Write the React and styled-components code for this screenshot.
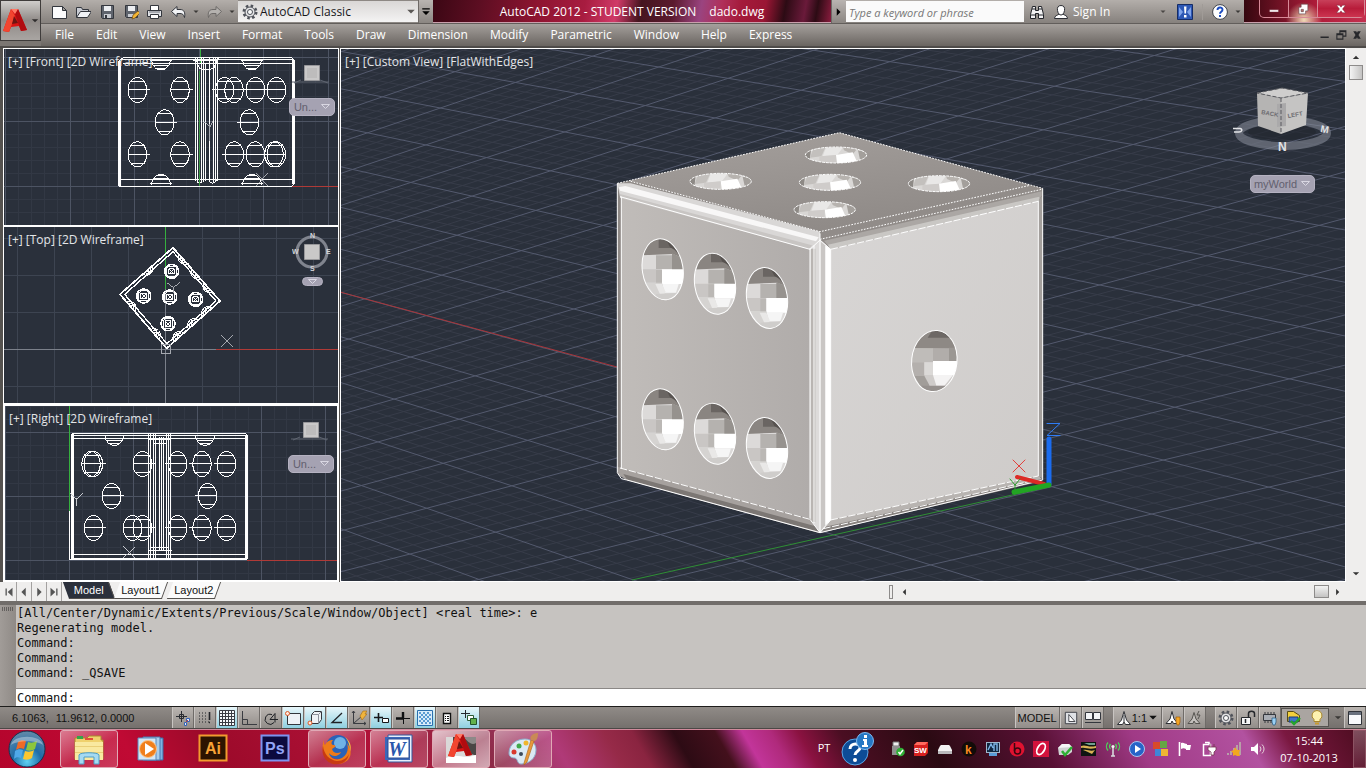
import styled, { createGlobalStyle, css } from "styled-components";

const menuItems = [
  "File",
  "Edit",
  "View",
  "Insert",
  "Format",
  "Tools",
  "Draw",
  "Dimension",
  "Modify",
  "Parametric",
  "Window",
  "Help",
  "Express",
];

const commandHistory = [
  "[All/Center/Dynamic/Extents/Previous/Scale/Window/Object] <real time>: e",
  "Regenerating model.",
  "Command:",
  "Command:",
  "Command: _QSAVE",
];

const quickActions = [
  { name: "New", icon: "newFile" },
  { name: "Open", icon: "open" },
  { name: "Save", icon: "save" },
  { name: "Save As", icon: "saveAs" },
  { name: "Plot", icon: "print" },
];

const draftToggles = [
  { name: "Infer Constraints", icon: "infer" },
  { name: "Snap Mode", icon: "snap" },
  { name: "Grid Display", icon: "grid", on: true },
  { name: "Ortho Mode", icon: "ortho" },
  { name: "Polar Tracking", icon: "polar" },
  { name: "Object Snap", icon: "osnap", on: true },
  { name: "3D Object Snap", icon: "osnap3d", on: true },
  { name: "Object Snap Tracking", icon: "otrack", on: true },
  { name: "Dynamic UCS", icon: "ducs" },
  { name: "Dynamic Input", icon: "dyn", on: true },
  { name: "Lineweight", icon: "lineweight" },
  { name: "Transparency", icon: "transparency", on: true },
  { name: "Quick Properties", icon: "quickProps" },
  { name: "Selection Cycling", icon: "cycling", on: true },
];

const taskbarApps = [
  { name: "Explorer", icon: "explorer", open: true },
  { name: "Media Player", icon: "mediaPlayer" },
  { name: "Illustrator", icon: "illustrator" },
  { name: "Photoshop", icon: "photoshop" },
  { name: "Firefox", icon: "firefox", open: true },
  { name: "Word", icon: "word", open: true },
  { name: "AutoCAD", icon: "autocad", open: true, active: true },
  { name: "Paint", icon: "paint", open: true },
];

const trayIcons = [
  "usb",
  "solidworks",
  "drive",
  "hamachi",
  "monitor",
  "beats",
  "opera",
  "printer",
  "winamp",
  "antenna",
  "play",
  "blocks",
  "flag",
  "power",
  "signal",
  "volume",
];

const outline = { stroke: "#33363d", strokeWidth: 1 };

const autocadMark = (
  <>
    <path d="M1 25 9 3l7 0 9 21-6 1-2-5-8 1-2 5z" fill="#d81414" />
    <path d="M9 3 1 25l6 1 6-16z" fill="#f2452f" />
    <path d="m16 3 9 21-6 1-6-17z" fill="#b00c10" />
    <path d="m12 10 4 7-6 1z" fill="#6d1512" />
    <path d="M9 3h7l-3 5z" fill="#ff7a66" />
  </>
);

const icons = {
  newFile: (
    <path d="M1.500 2.500h10l4 4v8h-14zM11.500 2.500v4h4" fill="#fbfbfc" {...outline} />
  ),
  open: (
    <>
      <path d="M1.500 13.500v-10h5l1 2h6v2" fill="#c9ccd4" {...outline} />
      <path d="m1.500 13.500 4-6h11l-4 6z" fill="#f1f3f7" {...outline} />
    </>
  ),
  save: (
    <>
      <path d="M2.500 1.500h12v13h-11l-1-1z" fill="#5f646d" {...outline} />
      <path d="M5 2h7v5H5z" fill="#eceef1" />
      <path d="M5 10h7v4H5z" fill="#c9ccd2" />
      <path d="M6 11h2v3H6z" fill="#33363d" />
    </>
  ),
  saveAs: (
    <>
      <path d="M2.500 1.500h12v12h-11l-1-1z" fill="#5f646d" {...outline} />
      <path d="M5 2h7v5H5z" fill="#eceef1" />
      <path d="M5 10h6v3H5z" fill="#c9ccd2" />
      <path d="m9 15 1-4 5-4 2 2-5 5z" fill="#f4b532" stroke="#704c14" strokeWidth=".7" />
    </>
  ),
  print: (
    <>
      <path d="M4.500 1.500h8v5h-8z" fill="#fff" {...outline} />
      <path d="M1.500 6.500h14v6h-14z" fill="#e0e2e6" {...outline} />
      <path d="M4.500 10.500h8v4h-8z" fill="#fff" {...outline} />
      <path d="M3 8h11" stroke="#6e737d" />
    </>
  ),
  undo: (
    <path
      d="M1.500 7.500 7 2.500v3h3c4 0 5.500 3 4.500 8-.8-3-2-4-4.500-4H7v3z"
      fill="#f3f4f6"
      {...outline}
    />
  ),
  redo: (
    <path
      d="M15.500 7.500 10 2.500v3H7c-4 0-5.500 3-4.500 8 .8-3 2-4 4.500-4h3v3z"
      fill="#b5b2af"
      stroke="#6d6a68"
    />
  ),
  gear: (
    <>
      <circle cx="8" cy="8" r="6" fill="none" stroke="#4f525a" strokeWidth="3" strokeDasharray="2.400 2.300" />
      <circle cx="8" cy="8" r="5" fill="#e4e4e6" stroke="#4f525a" />
      <circle cx="8" cy="8" r="2.500" fill="#fbfbfb" stroke="#4f525a" />
    </>
  ),
  caret: <path d="M3 5h10l-5 5z" fill="currentColor" />,
  caretBar: <path d="M3 3h10v1.500H3zM3 7h10l-5 5z" fill="currentColor" />,
  caretRight: <path d="M5 3v10l5-5z" fill="currentColor" />,
  caretLeft: <path d="M11 3v10L6 8z" fill="currentColor" />,
  caretUp: <path d="m3 11 5-5 5 5z" fill="currentColor" />,
  first: <path d="M4 4h1.500v8H4zM12 3v10L6.500 8z" fill="currentColor" />,
  last: <path d="M10.500 4H12v8h-1.500zM4 3v10l5.500-5z" fill="currentColor" />,
  prev: <path d="M10 3v10L5 8z" fill="currentColor" />,
  next: <path d="M6 3v10l5-5z" fill="currentColor" />,
  binoculars: (
    <>
      <path d="M3.500 2.500h3v4h3v-4h3l2 8v4h-5v-5h-3v5h-5v-4z" fill="#f2f2f3" stroke="#22242a" />
      <path d="M1.500 11h5M9.500 11h5M3 5h3.500M9.500 5H13" stroke="#22242a" />
    </>
  ),
  person: (
    <>
      <path d="M1.500 14.500c0-3 3-3 4.500-4.500h4c1.500 1.500 4.500 1.500 4.500 4.500z" fill="#fff" stroke="#2b2d33" />
      <path d="M8 1.500c3 0 4 2 3.500 5S9.500 11 8 11s-3-1.500-3.500-4.500S5 1.500 8 1.500z" fill="#fff" stroke="#2b2d33" />
    </>
  ),
  exchange: (
    <>
      <path d="M.500.500h15v15H.500z" fill="#2d57b4" stroke="#152c66" />
      <path d="m2 3 4 5-4 5zM14 3l-4 5 4 5z" fill="#7fa3ea" />
      <path d="M7 2.500h2.500l-.5 7H7.500zM7 11h2.500v2.500H7z" fill="#fff" />
    </>
  ),
  help: (
    <>
      <circle cx="8" cy="8" r="7.400" fill="#fff" stroke="#3f4248" />
      <path
        d="M5.500 6c0-3.300 5-3.200 5-.3 0 2-2.500 2-2.500 4"
        fill="none"
        stroke="#1c4cc0"
        strokeWidth="1.900"
      />
      <path d="M7 11h2v2H7z" fill="#1c4cc0" />
    </>
  ),
  minimize: <path d="M2 9h12v3H2z" fill="#fff" stroke="#6f2233" strokeWidth=".6" />,
  restore: (
    <path
      d="M5.500 1.500h9v9h-3v4h-9v-9h3zM5.500 8.500h3v3h-3z"
      fill="#fff"
      fillRule="evenodd"
      stroke="#5a3a40"
      strokeWidth=".8"
    />
  ),
  close: (
    <path
      d="M2 3h4l2 2.500L10 3h4l-4 5 4 5h-4l-2-2.500L6 13H2l4-5z"
      fill="#fff"
      stroke="#6f2233"
      strokeWidth=".6"
    />
  ),
  docMin: <path d="M2 10h11v2H2z" fill="#26272b" />,
  docRestore: (
    <path d="M6.500 6V2.500h8v7H11M6.500 3.500h8M2.500 6.500h8v7h-8zM3 7.500h7" fill="none" stroke="#26272b" strokeWidth="1.400" />
  ),
  docClose: (
    <path d="M3 3h4l1 2 1-2h4l-3 5 3 5H9l-1-2-1 2H3l3-5z" fill="#26272b" />
  ),
  infer: (
    <>
      <path d="M6.500 1v11M1 6.500h11M4.500 4.500h4v4h-4z" fill="none" stroke="#2a2c31" />
      <path d="M11.500 8.500h3v3h-3zM9.500 12.500h2v3h-2z" fill="#e9eefb" stroke="#3462b8" />
      <path d="m11 12 2-2" stroke="#d03a2c" />
    </>
  ),
  snap: (
    <>
      <path
        d="M2 3h1M5 3h1M8 3h1M2 6h1M5 6h1M8 6h1M2 9h1M5 9h1M8 9h1M2 12h1M5 12h1M8 12h1M11 12h1"
        stroke="#222428"
      />
      <path d="M12.500 2v8M12 12.500h1" stroke="#222428" strokeWidth="1.600" />
    </>
  ),
  grid: (
    <>
      <path d="M.500.500h15v15H.500z" fill="#f6fafc" />
      <path
        d="M.500.500h15v15H.500zM3.500 0v16M6.500 0v16M9.500 0v16M12.500 0v16M0 3.500h16M0 6.500h16M0 9.500h16M0 12.500h16"
        fill="none"
        stroke="#3a3d44"
      />
    </>
  ),
  ortho: <path d="M1.500 1v13.500H16M1.500 9.500h5v5" fill="none" stroke="#3a3c41" />,
  polar: (
    <path d="M7 9.500h8M7 9.500l5-6v9M9 4.700A5 5 0 1 0 11 12.500" fill="none" stroke="#1f2125" />
  ),
  osnap: (
    <>
      <path d="M2.500 3.500h13v11h-13z" fill="#eef2f6" stroke="#33363c" />
      <circle cx="2.500" cy="3.500" r="2" fill="#ffe9dd" stroke="#dc5a28" />
    </>
  ),
  osnap3d: (
    <>
      <path d="m4.500 4.500 3-3h7v8l-3 4h-7z" fill="#eef2f6" stroke="#33363c" />
      <path d="M4.500 4.500h7v9M11.500 4.500l3-3" fill="none" stroke="#8d929c" />
      <circle cx="3" cy="13" r="2" fill="#ffe9dd" stroke="#dc5a28" />
    </>
  ),
  otrack: <path d="M13 3 3 12.500h10" fill="none" stroke="#1f2125" strokeWidth="1.300" />,
  ducs: (
    <>
      <path d="M2.500 1v12.500H15M2.500 13.500 11 6M1 3l1.500-2L4 3M13 12l2 1.500-2 1.500" fill="none" stroke="#3a3c41" />
      <path d="m9 6 3-5h4l-2 3h2l-5 6z" fill="#f0b43c" stroke="#a36a12" strokeWidth=".6" />
    </>
  ),
  dyn: (
    <>
      <path d="M5.500 3v9M1 7.500h9" stroke="#16171a" strokeWidth="1.600" />
      <path d="M9.500 8.500h6v4h-6z" fill="#fff" stroke="#16171a" />
    </>
  ),
  lineweight: (
    <>
      <path d="M8 2v6M1 8.500h7" stroke="#0e0f11" strokeWidth="2.400" />
      <path d="M8.500 8v6M8 8.500h7" stroke="#0e0f11" />
    </>
  ),
  transparency: (
    <>
      <path d="M.500.500h15v15H.500z" fill="#d9ecfa" stroke="#2a6fae" />
      <path
        d="M2 2h2v2H2zM6 2h2v2H6zM10 2h2v2h-2zM4 4h2v2H4zM8 4h2v2H8zM12 4h2v2h-2zM2 6h2v2H2zM6 6h2v2H6zM10 6h2v2h-2zM4 8h2v2H4zM8 8h2v2H8zM12 8h2v2h-2zM2 10h2v2H2zM6 10h2v2H6zM10 10h2v2h-2zM4 12h2v2H4zM8 12h2v2H8zM12 12h2v2h-2z"
        fill="#5b9bd2"
      />
    </>
  ),
  quickProps: (
    <>
      <path d="M4.500 3.500h7v10h-7z" fill="#fff" stroke="#111" strokeWidth="1.400" />
      <path d="M6 6.500h1M8 6.500h2M6 8.500h1M8 8.500h2M6 10.500h1M8 10.500h2" stroke="#111" />
    </>
  ),
  cycling: (
    <>
      <path d="M4.500 0v8M0 3.500h9" stroke="#26282d" />
      <path d="M6.500 5.500h6v5h-6z" fill="#fff" stroke="#2c5b32" />
      <path d="M9.500 8.500h6v6h-6z" fill="#62b14b" stroke="#22542a" />
    </>
  ),
  modelSpace: (
    <>
      <path d="M1.500 1.500h13v13h-13z" fill="#dfe1e5" {...outline} />
      <path d="M5.500 4v8h7z" fill="#fff" {...outline} />
    </>
  ),
  quickLayouts: (
    <>
      <path d="M.500 2.500h7v7h-7zM8.500 2.500h7v7h-7z" fill="#f3f4f6" {...outline} />
      <path d="M0 12.500h16" stroke="#33363d" />
    </>
  ),
  annoScale: (
    <path
      d="M8 1.500 5.500 10l-4 4.500h5L8 12l1.500 2.500h5l-4-4.500zM8 5v7"
      fill="#fff"
      stroke="#2f3136"
    />
  ),
  annoVisible: (
    <>
      <path d="M7 1.500 5 9l-4 4.500h5L7 11l1.500 2.500H13L9 9z" fill="#fff" stroke="#2f3136" />
      <path d="M11 7h4v5l-1 3h-2l-1-3z" fill="#f5a623" stroke="#9d5c10" strokeWidth=".7" />
    </>
  ),
  annoAuto: (
    <>
      <path d="M7 2.500 5 9l-4 4.500h5L7 11l1.500 2.500H13L9 9z" fill="#c4c0bd" stroke="#55534f" />
      <path d="m12 1-2 4h3l-2 4" fill="none" stroke="#55534f" />
    </>
  ),
  lock: (
    <>
      <path d="M1.500 7.500h9v7h-9z" fill="#f6f6f7" stroke="#25272b" />
      <path d="M8.500 7V3.500c0-3 6-3 6 0V7" fill="none" stroke="#25272b" strokeWidth="1.500" />
      <path d="M5.500 9v4" stroke="#25272b" strokeWidth="1.500" />
    </>
  ),
  chip: (
    <>
      <path d="M1.500 4.500h12v6h-12z" fill="#a9adb4" stroke="#34373d" />
      <path d="M3 2v2M6 2v2M9 2v2M12 2v2M3 11v2M6 11v2M9 11v2" stroke="#34373d" />
      <path d="M10 8h4v4l-1 3h-2l-1-3z" fill="#9ad0f4" stroke="#27567d" strokeWidth=".7" />
    </>
  ),
  layers: (
    <>
      <path d="M1.500 1.500h6l6 4v6h-12z" fill="#f2cf3c" stroke="#594c12" />
      <path d="M3 7h9v5H3z" fill="#3f74c9" stroke="#1c3d78" />
      <path d="m5 11 3 3 6-6" fill="none" stroke="#25a52c" strokeWidth="2.400" />
    </>
  ),
  bulb: (
    <>
      <path d="M8 .500a5 5 0 0 1 3 9v2H5v-2A5 5 0 0 1 8 .500z" fill="#fdf2b0" stroke="#a8862c" />
      <path d="M6 12.500h4v2H6z" fill="#c99a2e" />
    </>
  ),
  cleanScreen: (
    <>
      <path d="M1.500 1.500h13v13h-13z" fill="#f8f9fb" stroke="#2f3238" />
      <path d="M2 2h12v3H2z" fill="#69707d" />
    </>
  ),

  usb: (
    <>
      <path d="M4 1h6v4H4z" fill="#eee" stroke="#777" />
      <path d="M3 5h8v9H3z" fill="#8f8f8f" />
      <circle cx="11.500" cy="11" r="4.300" fill="#2eaf33" />
      <path d="m9.500 11 1.500 2 3-4" fill="none" stroke="#fff" strokeWidth="1.500" />
    </>
  ),
  solidworks: (
    <>
      <path d="M1 4 4 1h11v11l-3 3H1z" fill="#d8201f" />
      <path d="M1 4 4 1h11l-3 3z" fill="#ff6a5f" />
      <text x="1" y="12" fontSize="8" fontWeight="700" fill="#fff">SW</text>
    </>
  ),
  drive: (
    <>
      <path d="m3 5 1-1h8l1 1 2 4v4H1V9z" fill="#f3f3f3" />
      <path d="M1 10h14v3H1z" fill="#b9b9bb" />
    </>
  ),
  hamachi: (
    <>
      <circle cx="8" cy="8" r="7.500" fill="#120c08" />
      <text x="4" y="13" fontSize="12" fontWeight="700" fill="#f6871f">k</text>
    </>
  ),
  monitor: (
    <>
      <path d="M1 1h14v11H1z" fill="#9fb6cc" />
      <path d="M2 2h12v9H2z" fill="#0f2740" />
      <path d="M3 9l3-6 2 4M9 10V3h3v7" fill="none" stroke="#7fb6e8" strokeWidth="1.400" />
      <path d="M4 12h8v3H4z" fill="#5b9cd8" />
    </>
  ),
  beats: (
    <>
      <circle cx="8" cy="8" r="7.500" fill="#e01230" />
      <circle cx="8.500" cy="10" r="3" fill="none" stroke="#3a0610" strokeWidth="1.500" />
      <path d="M5.500 2v8" stroke="#3a0610" strokeWidth="1.500" />
    </>
  ),
  opera: (
    <>
      <path d="M0 0h16v16H0z" fill="#d3123c" />
      <ellipse cx="8" cy="8" rx="3.500" ry="6" transform="rotate(30 8 8)" fill="none" stroke="#fff" strokeWidth="1.800" />
    </>
  ),
  printer: (
    <>
      <path d="m1 7 4-4h7l3 3v5l-4 3H2z" fill="#cfd3d3" />
      <path d="m1 7 4-4h7l3 3z" fill="#f4f6f6" />
      <path d="m5 10 3 4 7-8" fill="none" stroke="#2fb034" strokeWidth="2.500" />
    </>
  ),
  winamp: (
    <>
      <path d="M0 1h15v14H0z" fill="#0f1512" />
      <path d="M0 5c5-2 7 2 15 0v2c-8 2-10-1-15 0zM2 9c5-1 7 2 12 0l-3 4c-3-1-5-3-9-4z" fill="#d9b254" />
      <path d="M3 2h11v2H8z" fill="#6fa08e" />
    </>
  ),
  antenna: (
    <>
      <path d="M8 6v9M6 15h4" stroke="#d8dadd" strokeWidth="1.600" />
      <path d="M5.500 3a4 4 0 0 0 0 5M10.500 3a4 4 0 0 1 0 5M3 1.500a6 6 0 0 0 0 8M13 1.500a6 6 0 0 1 0 8" fill="none" stroke="#4ed05a" strokeWidth="1.300" />
      <circle cx="8" cy="5.500" r="1.600" fill="#eef4ee" />
    </>
  ),
  play: (
    <>
      <circle cx="8" cy="8" r="7.500" fill="#2764c8" stroke="#a8c7f0" />
      <path d="M6 4v8l6-4z" fill="#fff" />
    </>
  ),
  blocks: (
    <>
      <path d="M0 1h7v7H0z" fill="#d84a2b" />
      <path d="M7 0h7v7H7z" fill="#65a543" />
      <path d="M2 8h6v7H2z" fill="#3f86d8" />
      <path d="M8 8h7v7H8z" fill="#efb532" />
    </>
  ),
  flag: (
    <>
      <path d="M2.500 1v14" stroke="#fff" strokeWidth="1.600" />
      <path d="M4 2c3-1 4 1 6 1v1h4l-1 5H9V8C7 7 6 7 4 8z" fill="#fff" />
    </>
  ),
  power: (
    <>
      <path d="M2.500 3.500h7v11h-7zM4 1.500h4v2" fill="none" stroke="#fff" strokeWidth="1.500" />
      <path d="M7 6h8v3l-2 2v3h-3v-3L7 9zM9 3v3M13 3v3" fill="#fff" stroke="#74324f" strokeWidth=".8" />
    </>
  ),
  signal: (
    <>
      <path d="M2 12h2v2H2zM5 10h2v4H5zM8 7h2v7H8zM11 4h2v10h-2zM14 1h2v13h-2z" fill="#b7a0a8" />
      <path d="m10 6 2 3h3l-1 3 1 3h-3l-2-1-2 1v-3l-2-2 3-1z" fill="#f2a81e" />
    </>
  ),
  volume: (
    <>
      <path d="M2 6h3l4-4v12l-4-4H2z" fill="#fff" />
      <path d="M11 5.500a4 4 0 0 1 0 5M13 3.500a6 6 0 0 1 0 9" fill="none" stroke="#e6d2da" />
    </>
  ),
};

// 32px artwork for the taskbar
const appArt = {
  explorer: (
    <>
      <path d="M2 5h12l2-2h12v4h2v19H2z" fill="#efd16d" stroke="#a98a2e" />
      <path d="M4 3h6v3H4z" fill="#35a34a" />
      <path d="M12 5h8v2h-8z" fill="#e24e3b" />
      <path d="M2 9h28v18H2z" fill="#f9e9a0" />
      <path d="M2 13h28v1H2zM2 19h28v1H2z" fill="#e9cf78" />
      <path d="M6 31v-9c0-3 20-3 20 0v9h-5v-7H11v7z" fill="#a5daf2" stroke="#4c9fc9" />
    </>
  ),
  mediaPlayer: (
    <>
      <path d="M12 5h16v22H12z" fill="#7fb2e2" stroke="#3b6aa3" />
      <path d="M8 4h17v23H8z" fill="#a8cdec" stroke="#4879b0" />
      <path d="M3 5h18v22H3z" fill="#d3e6f6" stroke="#5b88b8" />
      <circle cx="13" cy="16" r="8.500" fill="#f07f1c" stroke="#fbc48a" />
      <path d="M10 10v12l9-6z" fill="#fff" />
    </>
  ),
  illustrator: (
    <>
      <path d="M2.500 2.500h27v25h-27z" fill="#2d1400" stroke="#f29a2e" strokeWidth="2" />
      <text x="8" y="21" fontSize="16" fontWeight="700" fill="#f7a336">Ai</text>
    </>
  ),
  photoshop: (
    <>
      <path d="M2.500 2.500h27v25h-27z" fill="#0c0a3e" stroke="#7d93f0" strokeWidth="2" />
      <text x="6" y="21" fontSize="16" fontWeight="700" fill="#93a6f8">Ps</text>
    </>
  ),
  firefox: (
    <>
      <circle cx="17" cy="14" r="12" fill="#2a62b8" />
      <circle cx="19" cy="10" r="6" fill="#6fb3e6" />
      <path
        d="M3 7c0 3 0 4 1 5 2-4 5-5 8-5-2 2-2 4 0 5 2 0 3 1 2 2l-3 2c1 4 5 5 9 3-1 4-9 6-12 1 1 6 8 8 13 5 5-3 7-8 5-15 6 8 4 16-2 19-7 4-16 2-20-5-3-6-3-12-1-17z"
        fill="#ee7a1a"
      />
      <path d="M2 13c1 8 6 14 14 15 6 0 10-3 12-7-2 9-9 11-16 10C4 29 0 21 2 13z" fill="#c83a12" />
      <path d="M24 4c5 4 7 9 5 15 0-6-1-10-5-15z" fill="#fbc23a" />
    </>
  ),
  word: (
    <>
      <path d="M5 2h24v27H5z" fill="#e6eefb" stroke="#35599c" />
      <path d="M2 4h25v23H2z" fill="#3a67b8" />
      <path d="M5 6h21v19H5z" fill="#fff" stroke="#2b4f94" />
      <text x="5" y="23" fontFamily="Liberation Serif, serif" fontSize="20" fontWeight="700" fontStyle="italic" fill="#2b57ac">
        W
      </text>
    </>
  ),
  autocad: (
    <>
      <path d="M1 4h30v26H1z" fill="#dad9d8" />
      <path d="M8 4h23v18c-9 0-9-8-23-7z" fill="#4a4645" />
      <path d="M18 4h13v6c-5 3-8-2-13-6z" fill="#8d8988" />
      <path d="M1 25c10-6 18 2 30-3v8H1z" fill="#fff" />
      <g transform="translate(2 -2)">{autocadMark}</g>
    </>
  ),
  paint: (
    <>
      <path
        d="M2 20C2 11 10 6 18 6c7 0 11 5 11 11 0 9-8 14-15 14-4 0-3-5-6-6-3 0-6-1-6-5z"
        fill="#dbe9f4"
        stroke="#8eb1cd"
      />
      <circle cx="7" cy="19" r="2.500" fill="#d9382c" />
      <circle cx="12" cy="13" r="2.500" fill="#3fa84a" />
      <circle cx="19" cy="10" r="2.500" fill="#f0b62c" />
      <circle cx="14" cy="21" r="2" fill="#3b4a5c" />
      <path d="m17 30 7-23 3 1-7 21-3 3z" fill="#e8983a" stroke="#a9641c" strokeWidth=".6" />
      <path d="M24 7c-2-3 1-7 7-7 0 4-1 8-4 8z" fill="#c98a56" />
    </>
  ),
};

function Icon({ name, size = 16 }) {
  return (
    <svg width={size} height={size} viewBox="0 0 16 16" aria-hidden="true">
      {icons[name]}
    </svg>
  );
}

function range(from, to, step) {
  const values = [];
  for (let value = from; value <= to; value += step) {
    values.push(value);
  }
  return values;
}

// Maps a point of the ground plane to the perspective view
function project(i, j) {
  const w = 1 - 0.03 * i - 0.019 * j;
  const x = (1051.7 + 65.4 * i + 89.5 * j) / w;
  const y = (486.7 + 11.9 * i - 35.4 * j) / w;
  return `${x.toFixed(1)} ${y.toFixed(1)}`;
}

function groundPath(major) {
  const parts = [];
  for (let n = -140; n <= 80; n++) {
    if ((n % 5 === 0) !== major) continue;
    const value = n / 5;
    if (value <= 5) {
      parts.push(`M${project(value, -14)}L${project(value, 20)}`);
    }
    if (value >= -14) {
      parts.push(`M${project(-26, value)}L${project(6, value)}`);
    }
  }
  return parts.join("");
}

const groundMajor = groundPath(true);
const groundMinor = groundPath(false);

function FlatGrid({ x, y, step, minor }) {
  const lines = (gap) =>
    range(x - Math.ceil(x / gap) * gap, 340, gap)
      .map((value) => `M${value.toFixed(1)} 0V600`)
      .concat(
        range(y - Math.ceil(y / gap) * gap, 600, gap).map(
          (value) => `M0 ${value.toFixed(1)}H340`
        )
      )
      .join("");
  return (
    <g fill="none">
      {minor && <path d={lines(step / 5)} stroke="#323844" />}
      <path d={lines(step)} stroke={minor ? "#4d5463" : "#3d4451"} />
    </g>
  );
}

function WirePip({ x, y, flip }) {
  const side = flip ? -1 : 1;
  return (
    <g transform={`translate(${x} ${y}) scale(${side} 1)`}>
      <ellipse rx="28" ry="38" />
      <path d="M-28 0H38M-20-26H22M-20 27H22M20-28C30-10 30 12 20 28" />
    </g>
  );
}

function HalfPip({ x, y, up }) {
  return (
    <path
      transform={`translate(${x} ${y}) scale(1 ${up ? -1 : 1})`}
      d="M-29 4C-26 26-14 36 0 36S26 26 29 4M-32 8H32M-24 22H24M-14 32H14"
    />
  );
}

function FrontDrawing() {
  return (
    <g transform="translate(-4 -49)" shapeRendering="crispEdges">
      <FlatGrid x={199.3} y={186.3} step={64.5} minor />
      <path d="M200 49V64" stroke="#35b03e" strokeWidth="1" />
      <path d="M290 186.500H340" stroke="#b03a37" />
      <g transform="translate(0 44) scale(.33333)" fill="none" stroke="#fff" strokeWidth="3">
        <path d="M368 42H875L885 50V415L875 427H357V50zM360 48H880M370 60H875M360 408H880" />
        <path d="M359 50V427M881 48V420" strokeWidth="8" />
        <path d="M587 42V410M592 42V410M604 42V418M612 42V415M618 60V410M628 42V415M640 42V415M646 42V415M653 42V410M590 410Q598 425 606 410M626 410Q638 425 650 410" />
        <path d="M580 50H655M584 60H650M596 70Q620 84 645 70M585 42L600 75M655 42L640 75" />
        <path d="M599 80V427" stroke="#3d9a45" />
        <path d="M608 236H618L630 248L640 230M628 240V292M770 388L802 425M802 388L770 425" stroke="#a6a9b0" />
        <HalfPip x={483} y={42} />
        <HalfPip x={756} y={42} />
        <HalfPip x={483} y={427} up />
        <HalfPip x={756} y={427} up />
        <WirePip x={412} y={138} />
        <WirePip x={540} y={138} />
        <WirePip x={494} y={235} />
        <WirePip x={412} y={331} />
        <WirePip x={540} y={331} />
        <WirePip x={674} y={138} flip />
        <WirePip x={702} y={138} flip />
        <WirePip x={766} y={138} flip />
        <WirePip x={829} y={138} flip />
        <WirePip x={748} y={235} flip />
        <WirePip x={703} y={331} flip />
        <WirePip x={766} y={331} flip />
        <WirePip x={822} y={331} flip />
        <WirePip x={829} y={331} flip />
      </g>
    </g>
  );
}

const topPips = [
  [515, 139],
  [431, 213],
  [509, 216],
  [587, 223],
  [504, 296],
];

const edgePips = [
  [445, 138, 140],
  [548, 105, 225],
  [586, 150, 225],
  [622, 190, 225],
  [395, 242, 45],
  [468, 324, 45],
  [532, 332, -42],
  [576, 294, -42],
  [618, 258, -42],
];

function TopDrawing() {
  return (
    <g transform="translate(-4 -228)" shapeRendering="crispEdges">
      <FlatGrid x={165.5} y={350.5} step={36.9} />
      <path d="M4 350.500H216M165.500 290V404" stroke="#7b808a" />
      <path d="M165.500 227V290" stroke="#35b03e" />
      <path d="M216 350.500H340" stroke="#b03a37" />
      <g transform="translate(0 226) scale(.33333)" fill="none" stroke="#fff" strokeWidth="3">
        <path d="M519 68L660 228L500 370L360 208z" strokeWidth="5" />
        <path d="M519 80L648 228L501 356L374 208z" strokeWidth="4" />
        {edgePips.map(([x, y, angle]) => (
          <path
            key={`${x}-${y}`}
            transform={`translate(${x} ${y}) rotate(${angle})`}
            d="M-20 6C-14-16 14-16 20 6M-12 4C-8-8 8-8 12 4M-5-10L5 6M5-10L-5 6"
          />
        ))}
        {topPips.map(([x, y]) => (
          <g key={`${x}-${y}`} transform={`translate(${x} ${y})`}>
            <circle r="21" strokeWidth="5" />
            <path d="M-14-10L-9-15H10L15-10V10L9 15H-10L-15 10zM-8-8H8V8H-8zM-8-8L8 8M8-8L-8 8" />
          </g>
        ))}
        <path d="M500 172L520 188L540 172M520 188V205M662 330L698 366M698 330L662 366M484 358H512V385H484z" stroke="#a6a9b0" />
      </g>
    </g>
  );
}

function RightDrawing() {
  return (
    <g transform="translate(-5 -406)" shapeRendering="crispEdges">
      <FlatGrid x={69.3} y={560.3} step={64} minor />
      <path d="M69.500 400V512" stroke="#35b03e" />
      <path d="M247 560.500H340" stroke="#b03a37" />
      <g transform="translate(0 404) scale(.33333)" fill="none" stroke="#fff" strokeWidth="3">
        <path d="M208 320V468H741M215 88H735L742 94V460L735 467M220 94H738M220 103H738M220 452H738M222 464H738" />
        <path d="M217 90V466M740 92V464" strokeWidth="8" />
        <path d="M446 88V466M453 88V466M460 88V466M468 88V466M478 100V440M486 100V440M492 100V440M499 88V466M506 88V466M512 88V466" />
        <path d="M440 95H520M446 108H514M460 118H500M445 440H515M440 452H520M452 432H508M440 464H520" />
        <path d="M210 268L230 285L248 268M230 285V305M370 428L406 462M406 428L370 462" stroke="#c8cad0" />
        <HalfPip x={343} y={88} />
        <HalfPip x={615} y={88} />
        <WirePip x={273} y={180} />
        <WirePip x={280} y={180} />
        <WirePip x={427} y={180} />
        <WirePip x={335} y={276} />
        <WirePip x={281} y={372} />
        <WirePip x={398} y={372} />
        <WirePip x={427} y={372} />
        <WirePip x={533} y={180} flip />
        <WirePip x={606} y={180} flip />
        <WirePip x={679} y={180} flip />
        <WirePip x={623} y={276} flip />
        <WirePip x={533} y={372} flip />
        <WirePip x={606} y={372} flip />
        <WirePip x={679} y={372} flip />
      </g>
    </g>
  );
}

function SidePip({ x, y }) {
  return (
    <g transform={`translate(${x} ${y})`}>
      <g clipPath="url(#sideClip)">
        <path d="M-70-95H70V95H-70z" fill="#dcdad9" />
        <path d="M-70-95H70V-30L30-46L-70-42z" fill="#8a8581" />
        <path d="M-12-95H70V-20L30-64L-12-64z" fill="#6a6562" />
        <path d="M8-95H70V-40L22-66z" fill="#57524f" />
        <path d="M-20-42H30V0H-20z" fill="#b5b2af" />
        <path d="M28-48L70-30V6H28z" fill="#96928e" />
        <path d="M-64 0H-4V40H-64z" fill="#c9c6c4" />
        <path d="M-20 2H-2V44H-20z" fill="#bbb8b5" />
        <path d="M-2 0H70V44H-2z" fill="#fff" />
        <path d="M-2 44H48L40 70H6z" fill="#f5f5f5" />
        <path d="M-50 40H-2L6 70L-20 84z" fill="#d5d3d1" />
        <path d="M-22 44L0 92L8 66L-2 44z" fill="#e9e8e7" />
        <path d="M-20 74L50 70V95H-20z" fill="#cfcdcb" />
      </g>
      <ellipse rx="61" ry="92" transform="rotate(-9)" fill="none" stroke="#fff" strokeWidth="3" />
    </g>
  );
}

function LidPip({ x, y }) {
  return (
    <g transform={`translate(${x} ${y})`}>
      <g clipPath="url(#lidClip)">
        <path d="M-95-26H95V26H-95z" fill="#d9d7d5" />
        <path d="M-95-26H-74L-80 26H-95z" fill="#8d8985" />
        <path d="M-66-26L-30-26L-44 4L-78 8z" fill="#c3c0bd" />
        <path d="M-30-22L20-22L4 0L-40 4z" fill="#e9e8e7" />
        <path d="M20-26H70L50-2L24-14z" fill="#b7b3af" />
        <path d="M0 0L50-8L62 18L4 26z" fill="#fff" />
        <path d="M-50 4L0 0V26H-50z" fill="#cfccca" />
        <path d="M66-14L95-8V20L72 14z" fill="#a39f9b" />
      </g>
      <ellipse rx="92" ry="24" fill="none" stroke="#fff" strokeWidth="3" strokeDasharray="8 3" />
    </g>
  );
}

function DiceModel() {
  return (
    <g transform="translate(600 120) scale(.33333)">
      <defs>
        <linearGradient id="lid" x1="0" y1="0" x2=".5" y2="1">
          <stop offset="0" stopColor="#a5a09d" />
          <stop offset="1" stopColor="#8f8a87" />
        </linearGradient>
        <linearGradient id="side" x1="0" y1="0" x2="1" y2="0">
          <stop offset="0" stopColor="#c0bcb9" />
          <stop offset="1" stopColor="#b0acaa" />
        </linearGradient>
        <linearGradient id="front" x1="0" y1="0" x2="1" y2="1">
          <stop offset="0" stopColor="#d8d6d5" />
          <stop offset="1" stopColor="#cecbc9" />
        </linearGradient>
        <clipPath id="sideClip">
          <ellipse rx="61" ry="92" transform="rotate(-9)" />
        </clipPath>
        <clipPath id="lidClip">
          <ellipse rx="92" ry="24" />
        </clipPath>
        <clipPath id="frontClip">
          <ellipse rx="68" ry="92" transform="rotate(6)" />
        </clipPath>
      </defs>
      <path d="M52 190L718 38L1328 205V1070L660 1240L80 1080L52 1060z" fill="#8e8986" />
      <path d="M90 182L718 38L1290 195L660 335z" fill="url(#lid)" />
      <path d="M64 230L630 385V1196L64 1046z" fill="url(#side)" />
      <path d="M52 190H92L660 335V362L630 388L60 230z" fill="#d9d7d6" />
      <path d="M56 202L76 198L656 352L648 364L60 212z" fill="#f8f7f7" />
      <path d="M60 222L636 376L628 388L60 234z" fill="#c8c5c3" />
      <path d="M660 335L1290 196L1328 205V226L692 386L660 358z" fill="#918c89" />
      <path d="M672 362L1325 214V226L1318 240L692 386z" fill="#aba7a4" />
      <path d="M684 374L1318 230V242L692 388z" fill="#c9c7c4" />
      <path d="M692 388L1315 242V1068L692 1200z" fill="url(#front)" />
      <path d="M1315 242L1328 226V1076L1315 1068z" fill="#a39f9c" />
      <path d="M52 1040L630 1198L660 1238L80 1080L56 1066z" fill="#a6a19e" />
      <path d="M70 1062L644 1218L660 1236L80 1078z" fill="#7c7774" />
      <path d="M692 1200L1315 1068L1328 1078L660 1238z" fill="#b8b4b1" />
      <path d="M676 1220L1322 1078L1326 1084L660 1238z" fill="#87827f" />
      <path d="M630 384L660 360L692 386V1200L660 1238L630 1196z" fill="#dddbda" />
      <path d="M632 386H646V1206H632z" fill="#b9b5b2" />
      <path d="M662 366L676 376V1216L662 1232z" fill="#c9c6c4" />
      <path d="M676 376L692 388V1200L676 1216z" fill="#fff" />
      <g fill="none" stroke="#fff" strokeWidth="3">
        <path d="M52 190V1058L64 1076L80 1080L660 1238L1328 1080V205" />
        <path d="M52 190L718 38L1328 205M92 184L660 335L1290 196M660 358L1325 208" strokeDasharray="5 4" />
        <path d="M64 230V1046M60 230L630 388M630 384V1196M642 376V1210M660 340V1238" />
        <path d="M692 388L1315 244M692 1200L1315 1068M60 1044L630 1198M670 1226L1290 1084" strokeDasharray="22 5" />
        <path d="M630 388L660 360L692 388V1200L660 1238L630 1198M1315 242V1068" />
      </g>
      {[448, 898].map((y) => (
        <g key={y}>
          <SidePip x={188} y={y} />
          <SidePip x={345} y={y + 43} />
          <SidePip x={501} y={y + 86} />
        </g>
      ))}
      <LidPip x={708} y={105} />
      <LidPip x={362} y={184} />
      <LidPip x={690} y={187} />
      <LidPip x={1017} y={191} />
      <LidPip x={674} y={269} />
      <g transform="translate(1003 723)">
        <g clipPath="url(#frontClip)">
          <path d="M-75-95H75V95H-75z" fill="#cfccca" />
          <path d="M-75-95H75V-36L-75-38z" fill="#8e8985" />
          <path d="M-4-95H75V-70H-20z" fill="#6d6865" />
          <path d="M10-95H75V-56L46-72z" fill="#45403e" />
          <path d="M-75-38H-4V4H-75z" fill="#bfbcb9" />
          <path d="M-4-38H44V0H-4z" fill="#b1adaa" />
          <path d="M44-40H75V0H44z" fill="#9b9793" />
          <path d="M-4 0H75V42H-4z" fill="#fff" />
          <path d="M-75 4H-30V44H-75z" fill="#b4b0ad" />
          <path d="M-30 4H-4V42H-30z" fill="#dbd9d7" />
          <path d="M-4 42H56L30 74H6z" fill="#f4f3f3" />
          <path d="M-60 44H-30L-14 74L-40 80z" fill="#a19d99" />
          <path d="M-40 74H40V95H-40z" fill="#96918e" />
        </g>
        <ellipse rx="68" ry="92" transform="rotate(6)" fill="none" stroke="#fff" strokeWidth="3" />
      </g>
    </g>
  );
}

function CustomViewDrawing() {
  return (
    <g transform="translate(-341 -49)">
      <g fill="none">
        <path d={groundMinor} stroke="#373c49" />
        <path d={groundMajor} stroke="#545a6e" />
        <path d="M340 292L617 367" stroke="#a8353a" />
        <path d="M632 580L1048 487" stroke="#2f8f35" />
      </g>
      <DiceModel />
      <g fill="none" strokeLinecap="round">
        <path d="M1049 439V484" stroke="#1a6cf0" strokeWidth="5" />
        <path d="M1017 477L1044 484" stroke="#dc2a25" strokeWidth="4" />
        <path d="M1014 492L1049 485" stroke="#22a523" strokeWidth="5" />
        <path d="M1047 423.500H1060L1047 435.500H1060" stroke="#2f7cf5" />
        <path d="M1013 460L1025 472M1025 460L1013 472" stroke="#e2413c" />
        <path d="M1010 479L1015 485L1020 479M1015 485V490" stroke="#2c9e2e" />
      </g>
    </g>
  );
}

function ViewCube() {
  return (
    <svg width="110" height="78" viewBox="1228 80 110 78" role="img" aria-label="View cube">
      <ellipse cx="1284" cy="133" rx="44" ry="13" fill="none" stroke="#8b8f9c" strokeOpacity=".55" strokeWidth="8" />
      <ellipse cx="1283" cy="132" rx="34" ry="8" fill="#20232c" fillOpacity=".5" />
      <path d="M1258 93L1283 88L1309 93L1282 98z" fill="#cfcecd" />
      <path d="M1258 93L1282 98V134L1259 126z" fill="#b5b4b3" />
      <path d="M1282 98L1309 93L1307 125L1282 134z" fill="#c5c4c3" />
      <path d="M1278 104L1287 103V126L1278 127z" fill="#aaa9aa" />
      <path d="M1258 93L1283 88L1309 93L1282 98zM1282 98V134" fill="none" stroke="#5a5b60" strokeDasharray="4 2" />
      <g fontFamily="Liberation Sans, sans-serif" fontSize="6" fontWeight="700" fill="#6e6e72">
        <text x="1262" y="114" transform="rotate(10 1262 114)">BACK</text>
        <text x="1289" y="118" transform="rotate(-10 1289 118)">LEFT</text>
      </g>
      <g fontFamily="Liberation Sans, sans-serif" fontWeight="700" fill="#e2e3e6">
        <text x="1279" y="151" fontSize="12">N</text>
        <text x="1321" y="132" fontSize="10" transform="rotate(10 1321 132)">M</text>
      </g>
      <path d="M1234 128.500H1241C1244 129 1243 132 1240 132H1235" fill="none" stroke="#e2e3e6" strokeWidth="1.500" />
    </svg>
  );
}

function FaceCube() {
  return (
    <svg width="40" height="20" viewBox="0 0 40 20" aria-hidden="true">
      <path d="M0 17H37M2 18L9 15M28 15L36 18" stroke="#5f6571" />
      <path d="M12.500.500h15v15h-15z" fill="#c9c8c8" stroke="#98989b" />
      <path d="M15 3h10v10H15z" fill="#bdbcbc" />
    </svg>
  );
}

function Compass() {
  return (
    <svg width="40" height="40" viewBox="0 0 40 40" role="img" aria-label="Compass">
      <circle cx="20" cy="20" r="15" fill="none" stroke="#80848e" strokeWidth="3" />
      <path d="M12.500 12.500h15v15h-15z" fill="#c9c8c8" stroke="#98989b" />
      <g fontFamily="Liberation Sans, sans-serif" fontSize="7" fontWeight="700" fill="#d5d6d9">
        <text x="18" y="6">N</text>
        <text x="18" y="39">S</text>
        <text x="0" y="22">W</text>
        <text x="34" y="22">E</text>
      </g>
    </svg>
  );
}

export default function App() {
  return (
    <>
      <GlobalStyle />
      <Screen>
        <Header>
          <AppButton aria-label="Application menu">
            <svg width="28" height="30" viewBox="0 0 28 30" aria-hidden="true">
              {autocadMark}
            </svg>
            <Icon name="caret" size={10} />
          </AppButton>
          <TitleRow>
            <QuickAccess>
              {quickActions.map(({ name, icon }) => (
                <IconButton key={name} aria-label={name}>
                  <Icon name={icon} />
                </IconButton>
              ))}
              <IconButton aria-label="Undo">
                <Icon name="undo" />
              </IconButton>
              <NarrowButton aria-label="Undo list">
                <Icon name="caret" size={8} />
              </NarrowButton>
              <IconButton aria-label="Redo">
                <Icon name="redo" />
              </IconButton>
              <NarrowButton aria-label="Redo list">
                <Icon name="caret" size={8} />
              </NarrowButton>
            </QuickAccess>
            <WorkspacePicker>
              <Icon name="gear" />
              <select aria-label="Workspace" defaultValue="classic">
                <option value="classic">AutoCAD Classic</option>
              </select>
              <Icon name="caret" size={12} />
            </WorkspacePicker>
            <EdgeButton aria-label="Customize toolbar">
              <Icon name="caretBar" size={12} />
            </EdgeButton>
            <Title>
              <span>AutoCAD 2012 - STUDENT VERSION</span>
              <span>dado.dwg</span>
            </Title>
            <InfoCenter>
              <EdgeButton aria-label="Collapse search">
                <Icon name="caretRight" size={12} />
              </EdgeButton>
              <SearchInput aria-label="Search help" placeholder="Type a keyword or phrase" />
              <InfoActions>
                <IconButton aria-label="Search">
                  <Icon name="binoculars" />
                </IconButton>
                <SignInButton>
                  <Icon name="person" />
                  <span>Sign In</span>
                  <Icon name="caret" size={8} />
                </SignInButton>
                <IconButton aria-label="Exchange">
                  <Icon name="exchange" />
                </IconButton>
                <Divider />
                <IconButton aria-label="Help">
                  <Icon name="help" />
                </IconButton>
                <NarrowButton aria-label="Help list">
                  <Icon name="caret" size={8} />
                </NarrowButton>
              </InfoActions>
            </InfoCenter>
            <WindowControls>
              <WindowButtons>
                <button aria-label="Minimize">
                  <Icon name="minimize" size={12} />
                </button>
                <button aria-label="Restore">
                  <Icon name="restore" size={12} />
                </button>
                <button aria-label="Close">
                  <Icon name="close" size={12} />
                </button>
              </WindowButtons>
            </WindowControls>
          </TitleRow>
          <MenuBar>
            {menuItems.map((item) => (
              <MenuItem key={item}>{item}</MenuItem>
            ))}
            <DocumentControls>
              <button aria-label="Minimize drawing">
                <Icon name="docMin" size={12} />
              </button>
              <button aria-label="Restore drawing">
                <Icon name="docRestore" size={12} />
              </button>
              <button aria-label="Close drawing">
                <Icon name="docClose" size={12} />
              </button>
            </DocumentControls>
          </MenuBar>
        </Header>

        <Workspace>
          <SideViews>
            <Viewport>
              <Canvas aria-label="Front view">
                <FrontDrawing />
              </Canvas>
              <ViewLabel>[+] [Front] [2D Wireframe]</ViewLabel>
              <ViewTools $top={16}>
                <FaceCube />
                <UcsButton>
                  Un... <UcsCaret />
                </UcsButton>
              </ViewTools>
            </Viewport>
            <Viewport>
              <Canvas aria-label="Top view">
                <TopDrawing />
              </Canvas>
              <ViewLabel>[+] [Top] [2D Wireframe]</ViewLabel>
              <ViewTools $top={5}>
                <Compass />
                <UcsButton $mini aria-label="Coordinate system">
                  <UcsCaret />
                </UcsButton>
              </ViewTools>
            </Viewport>
            <Viewport $active>
              <Canvas aria-label="Right view">
                <RightDrawing />
              </Canvas>
              <ViewLabel>[+] [Right] [2D Wireframe]</ViewLabel>
              <ViewTools $top={16}>
                <FaceCube />
                <UcsButton>
                  Un... <UcsCaret />
                </UcsButton>
              </ViewTools>
            </Viewport>
          </SideViews>
          <Viewport>
            <Canvas aria-label="Custom view">
              <CustomViewDrawing />
            </Canvas>
            <ViewLabel>[+] [Custom View] [FlatWithEdges]</ViewLabel>
            <ViewTools $top={31} $wide>
              <ViewCube />
              <UcsButton $wide>
                myWorld <UcsCaret />
              </UcsButton>
            </ViewTools>
          </Viewport>
          <VerticalScroll>
            <button aria-label="Scroll up">
              <Icon name="caretUp" size={10} />
            </button>
            <ScrollThumb />
            <button aria-label="Scroll down">
              <Icon name="caret" size={10} />
            </button>
          </VerticalScroll>
        </Workspace>

        <LayoutBar>
          <TabNav>
            {["first", "prev", "next", "last"].map((name) => (
              <button key={name} aria-label={`${name} tab`}>
                <Icon name={name} size={14} />
              </button>
            ))}
          </TabNav>
          <Tabs>
            <LayoutTab $active>
              <span>Model</span>
            </LayoutTab>
            <LayoutTab>
              <span>Layout1</span>
            </LayoutTab>
            <LayoutTab>
              <span>Layout2</span>
            </LayoutTab>
          </Tabs>
          <HorizontalScroll>
            <SplitHandle />
            <button aria-label="Scroll left">
              <Icon name="caretLeft" size={10} />
            </button>
            <HorizontalThumb />
            <button aria-label="Scroll right">
              <Icon name="caretRight" size={10} />
            </button>
          </HorizontalScroll>
        </LayoutBar>

        <CommandPanel>
          <CommandGrip>
            <svg width="12" height="4" aria-hidden="true">
              <path d="M0 1H12M0 3H12" stroke="#2d2b2a" strokeDasharray="1 1" />
            </svg>
          </CommandGrip>
          <CommandBody>
            <CommandHistory>
              {commandHistory.map((line, index) => (
                <p key={index}>{line}</p>
              ))}
            </CommandHistory>
            <CommandLine>
              <label htmlFor="command">Command:</label>
              <input id="command" autoComplete="off" />
            </CommandLine>
          </CommandBody>
        </CommandPanel>

        <StatusBar>
          <Coordinates>
            <span>6.1063,</span>
            <span>11.9612, 0.0000</span>
          </Coordinates>
          {draftToggles.map(({ name, icon, on }) => (
            <StatusButton key={name} $on={on} aria-label={name} aria-pressed={Boolean(on)}>
              <Icon name={icon} />
            </StatusButton>
          ))}
          <StatusSpacer />
          <StatusButton $wide>MODEL</StatusButton>
          <StatusButton aria-label="Model space">
            <Icon name="modelSpace" size={14} />
          </StatusButton>
          <StatusButton aria-label="Quick view layouts">
            <Icon name="quickLayouts" />
          </StatusButton>
          <StatusGap />
          <StatusButton $wide>
            <Icon name="annoScale" />
            1:1
            <Icon name="caret" size={12} />
          </StatusButton>
          <StatusButton aria-label="Annotation visibility">
            <Icon name="annoVisible" />
          </StatusButton>
          <StatusButton aria-label="Add scales">
            <Icon name="annoAuto" />
          </StatusButton>
          <StatusGap />
          <StatusButton aria-label="Workspace switching">
            <Icon name="gear" />
          </StatusButton>
          <StatusButton aria-label="Lock toolbars">
            <Icon name="lock" />
          </StatusButton>
          <StatusButton aria-label="Hardware acceleration">
            <Icon name="chip" />
          </StatusButton>
          <StatusTray>
            <Icon name="layers" />
            <Icon name="bulb" />
          </StatusTray>
          <NarrowButton aria-label="Status bar menu">
            <Icon name="caret" size={10} />
          </NarrowButton>
          <StatusButton aria-label="Clean screen">
            <Icon name="cleanScreen" />
          </StatusButton>
        </StatusBar>

        <Taskbar>
          <StartButton aria-label="Start">
            <svg width="38" height="38" viewBox="0 0 38 38" aria-hidden="true">
              <defs>
                <radialGradient id="orb" cx=".5" cy=".85" r=".8">
                  <stop offset="0" stopColor="#5fd0f2" />
                  <stop offset=".5" stopColor="#1f6ca8" />
                  <stop offset="1" stopColor="#5d87a8" />
                </radialGradient>
              </defs>
              <circle cx="19" cy="19" r="18" fill="url(#orb)" stroke="#16314c" />
              <path d="M10 12c3-2 5-2 8-1l-2 8c-3-1-5-1-8 1z" fill="#ef6a26" />
              <path d="M20 12c3 1 5 1 9-1l-2 8c-3 2-6 2-9 1z" fill="#8cc63e" />
              <path d="M7 21c3-2 5-2 8-1l-2 8c-3-1-5-1-7 1z" fill="#4fa8e8" />
              <path d="M17 21c3 1 6 1 9-1l-2 8c-3 2-6 2-9 1z" fill="#fbc72e" />
              <path d="M3 15C5 4 33 4 35 15 28 10 10 10 3 15z" fill="#fff" fillOpacity=".35" />
            </svg>
          </StartButton>
          <TaskbarApps>
            {taskbarApps.map(({ name, icon, open, active }) => (
              <TaskButton key={name} $open={open} $active={active} aria-label={name}>
                <svg width="32" height="32" viewBox="0 0 32 32" aria-hidden="true">
                  {appArt[icon]}
                </svg>
              </TaskButton>
            ))}
          </TaskbarApps>
          <LanguageButton>PT</LanguageButton>
          <TrayHelp aria-label="Language bar help">
            <svg width="34" height="34" viewBox="0 0 34 34" aria-hidden="true">
              <circle cx="15" cy="20" r="13" fill="#0d4c96" stroke="#5ba6e6" />
              <path d="M10 17c0-7 11-6 10-1 0 3-5 3-5 7" fill="none" stroke="#fff" strokeWidth="3" />
              <circle cx="15" cy="28" r="2" fill="#fff" />
              <circle cx="25" cy="9" r="8.500" fill="#2577c4" stroke="#7fbaf0" />
              <path d="M24 3h3v3h-3zM23 7h4v6h1v2h-6v-2h2V9h-1z" fill="#fff" />
            </svg>
          </TrayHelp>
          <Tray>
            {trayIcons.map((name) => (
              <Icon key={name} name={name} />
            ))}
          </Tray>
          <Clock>
            <time>15:44</time>
            <time>07-10-2013</time>
          </Clock>
          <ShowDesktop aria-label="Show desktop" />
        </Taskbar>
      </Screen>
    </>
  );
}

const GlobalStyle = createGlobalStyle`
  * {
    box-sizing: border-box;
  }

  body {
    margin: 0;
    overflow-x: hidden;
    background: #6f6b68;
    font-family: "Open Sans", "Noto Sans", sans-serif;
    font-size: 12px;
  }

  button,
  select,
  input {
    margin: 0;
    padding: 0;
    border: 0;
    background: none;
    color: inherit;
    font: inherit;
  }

  button {
    display: flex;
    align-items: center;
    justify-content: center;
  }

  p {
    margin: 0;
  }

  svg {
    display: block;
    flex-shrink: 0;
  }
`;

const metal = css`
  background: linear-gradient(#b3aeaa, #86817d);
`;

const Screen = styled.div`
  display: flex;
  flex-direction: column;
  min-height: 100vh;
`;

const Header = styled.header`
  display: grid;
  grid-template-columns: 41px 1fr;
  grid-template-rows: 24px 22px;
  border-bottom: 2px solid #4e4b49;
  background: #7b7672;
`;

const AppButton = styled.button`
  grid-row: 1 / 3;
  align-self: start;
  height: 41px;
  border: 1px solid #3f3c3b;
  background: linear-gradient(#cfcdcb, #8f8a87 50%, #a9a5a2);
  color: #2f2d2d;
`;

const TitleRow = styled.div`
  display: flex;
  min-width: 0;
  border-bottom: 1px solid #625e5b;
  background: #8d8884;
`;

const QuickAccess = styled.div`
  ${metal}
  display: flex;
  align-items: center;
  width: 197px;
  padding-left: 6px;
`;

const IconButton = styled.button`
  width: 24px;
  height: 22px;
`;

const NarrowButton = styled.button`
  width: 12px;
  color: #3a3836;
`;

const WorkspacePicker = styled.div`
  display: flex;
  align-items: center;
  width: 180px;
  margin-top: 1px;
  height: 21px;
  padding: 0 1px 0 4px;
  background: linear-gradient(#d9d7d6, #f4f3f3);
  color: #5a5755;

  select {
    flex: 1;
    padding-left: 2px;
    appearance: none;
    color: #17171a;
    outline: none;
  }
`;

const EdgeButton = styled.button`
  width: 15px;
  height: 23px;
  border-left: 1px solid #6d6966;
  background: linear-gradient(#b9b4b1, #8b8682);
  color: #000;
`;

const Title = styled.h1`
  display: flex;
  flex: 1;
  align-items: center;
  justify-content: center;
  gap: 13px;
  margin: 0;
  border-bottom: 1px solid #c9a0ac;
  background: linear-gradient(
    100deg,
    #3b0714 0%,
    #5d0e22 12%,
    #8d1430 26%,
    #a81c40 38%,
    #d03a68 46%,
    #45151f 52%,
    #5b1a2e 60%,
    #9a4480 67%,
    #b0305a 72%,
    #a41a3a 77%,
    #9a1634 83%,
    #2c0b14 88%,
    #6a1a3a 93%,
    #2c0b14 96%,
    #8a1c3e 100%
  );
  color: #fff;
  font-size: 12px;
  font-weight: 400;
  white-space: nowrap;
`;

const InfoCenter = styled.div`
  ${metal}
  display: flex;
  width: 413px;
`;

const SearchInput = styled.input`
  width: 178px;
  height: 21px;
  margin-top: 1px;
  padding: 2px 0 0 3px;
  background: #fafafa;
  color: #222;

  &::placeholder {
    color: #777;
    font-size: 11px;
    font-style: italic;
    opacity: 1;
  }
`;

const InfoActions = styled.div`
  display: flex;
  flex: 1;
  align-items: center;
  padding-left: 1px;
  color: #4a4745;
`;

const SignInButton = styled.button`
  flex: 1;
  gap: 4px;
  padding: 0 6px 0 4px;
  color: #fff;

  span {
    flex: 1;
    text-align: left;
  }

  svg:last-child {
    color: #4a4745;
  }
`;

const Divider = styled.span`
  width: 1px;
  height: 16px;
  margin: 0 5px;
  background: #a09b97;
`;

const WindowControls = styled.div`
  display: flex;
  align-items: flex-start;
  justify-content: flex-end;
  width: 122px;
  padding-right: 1px;
  border-bottom: 1px solid #c9a0ac;
  background: radial-gradient(circle at 60px 20px, #f0dcb8, transparent 18px),
    linear-gradient(90deg, #35070f, #7c1429 35%, #b01c3a 60%, #c3304f);
`;

const WindowButtons = styled.div`
  display: flex;
  height: 18px;
  border: 1px solid #d78a98;
  border-top: 0;
  border-radius: 0 0 5px 5px;

  button {
    width: 29px;
    border-right: 1px solid #d78a98;
  }

  button:last-child {
    width: 46px;
    border-right: 0;
    background: linear-gradient(#c8405a, #b81c3a 50%, #cc3450);
  }
`;

const MenuBar = styled.nav`
  display: flex;
  align-items: center;
  gap: 22px;
  padding: 0 3px 0 14px;
  background: linear-gradient(#a5a09c, #6a6561);
  color: #fff;
`;

const MenuItem = styled.button`
  height: 22px;
  line-height: 20px;
`;

const DocumentControls = styled.div`
  display: flex;
  gap: 4px;
  margin-left: auto;
`;

const Workspace = styled.main`
  display: grid;
  flex: 1;
  grid-template-columns: 340px 1fr 20px;
  min-height: 534px;
  background: #17191f;
`;

const SideViews = styled.div`
  display: grid;
  grid-template-rows: repeat(3, 1fr);
  padding: 0 1px 0 3px;
  background: #55524f;
`;

const Viewport = styled.section`
  position: relative;
  overflow: hidden;
  border: ${({ $active }) => ($active ? 2 : 1)}px solid #fff;
  background: #2a303b;
`;

const Canvas = styled.svg`
  position: absolute;
  width: 100%;
  height: 100%;
`;

const ViewLabel = styled.h2`
  position: absolute;
  top: 5px;
  left: 4px;
  margin: 0;
  color: #e3e5e8;
  font-size: 12px;
  font-weight: 400;
  line-height: 16px;
`;

const ViewTools = styled.div`
  position: absolute;
  top: ${({ $top }) => $top}px;
  right: 2px;
  display: flex;
  flex-direction: column;
  align-items: center;
  gap: ${({ $wide, $top }) => ($wide ? 17 : $top > 10 ? 13 : 5)}px;
  width: ${({ $wide }) => ($wide ? 122 : 48)}px;
`;

const UcsButton = styled.button`
  gap: 4px;
  width: ${({ $wide, $mini }) => ($wide ? 65 : $mini ? 21 : 46)}px;
  height: ${({ $mini }) => ($mini ? 9 : 18)}px;
  border: 1px solid #b5b2c1;
  border-radius: 5px;
  background: #a5a2b2;
  color: #62606e;
  font-family: "Liberation Sans", sans-serif;
  font-size: 11px;
`;

function UcsCaret() {
  return (
    <svg width="9" height="6" aria-hidden="true">
      <path d="M.500.500h8l-4 4z" fill="none" stroke="#d9d7e2" />
    </svg>
  );
}

const scrollTrack = css`
  display: flex;
  align-items: center;
  background: #efeeed;
  color: #333;
`;

const VerticalScroll = styled.div`
  ${scrollTrack}
  flex-direction: column;

  button {
    height: 17px;
  }

  button:last-child {
    margin-top: auto;
  }
`;

const ScrollThumb = styled.div`
  width: 14px;
  height: 15px;
  border: 1px solid #8d8b8a;
  background: linear-gradient(90deg, #f3f3f3, #c4c3c2);
`;

const LayoutBar = styled.div`
  display: flex;
  height: 19px;
  background: #efeeed;
`;

const TabNav = styled.div`
  display: flex;
  padding-left: 2px;
  color: #555;

  button {
    width: 15px;
    border-right: 1px solid #a3a1a0;
  }
`;

const Tabs = styled.div`
  display: flex;
  gap: 5px;
  padding-left: 4px;
`;

const LayoutTab = styled.button`
  height: 17px;
  min-width: 46px;
  padding: 0 4px;
  border-right: 1px solid #55524f;
  border-bottom: 1px solid #55524f;
  background: ${({ $active }) => ($active ? "#2b303b" : "#fbfbfb")};
  color: ${({ $active }) => ($active ? "#fff" : "#111")};
  transform: ${({ $active }) => ($active ? "skewX(20deg)" : "skewX(-20deg)")};
  font-family: "Liberation Sans", sans-serif;
  font-size: 11px;

  span {
    transform: ${({ $active }) => ($active ? "skewX(-20deg)" : "skewX(20deg)")};
  }
`;

const HorizontalScroll = styled.div`
  ${scrollTrack}
  width: 457px;
  margin-right: 20px;
  margin-left: auto;

  button {
    width: 17px;
  }
`;

const SplitHandle = styled.span`
  width: 4px;
  height: 14px;
  margin-right: 2px;
  border: 1px solid #8d8b8a;
`;

const HorizontalThumb = styled.div`
  width: 15px;
  height: 13px;
  margin-left: auto;
  border: 1px solid #8d8b8a;
  background: linear-gradient(#f3f3f3, #c4c3c2);
`;

const CommandPanel = styled.section`
  display: flex;
  border-top: 4px solid #716d6a;
`;

const CommandGrip = styled.div`
  width: 16px;
  padding: 2px;
  background: linear-gradient(90deg, #a19c98, #8f8a86);
`;

const CommandBody = styled.div`
  flex: 1;
  color: #111;
  font-family: "DejaVu Sans Mono", monospace;
  font-size: 12px;
  line-height: 15px;
`;

const CommandHistory = styled.div`
  padding: 1px 1px 7px;
  border-bottom: 1px solid #8b8886;
  background: #c6c3c0;

  p {
    white-space: pre;
  }
`;

const CommandLine = styled.div`
  display: flex;
  height: 17px;
  padding: 2px 1px 0;
  background: #fff;

  input {
    flex: 1;
    outline: none;
  }
`;

const StatusBar = styled.footer`
  display: flex;
  height: 23px;
  border-top: 1px solid #1e1d1c;
  border-bottom: 1px solid #4b4846;
  background: linear-gradient(#908b87, #75706d);
  color: #111;
  font-family: "Liberation Sans", sans-serif;
`;

const Coordinates = styled.output`
  display: flex;
  align-items: center;
  gap: 7px;
  width: 172px;
  padding-left: 12px;
  font-size: 11px;
`;

const StatusButton = styled.button`
  width: ${({ $wide }) => ($wide ? "auto" : "22px")};
  padding: ${({ $wide }) => ($wide ? "0 2px" : "0")};
  border-right: 1px solid #6f6b68;
  border-left: 1px solid #c9c5c2;
  background: ${({ $on }) =>
    $on
      ? "linear-gradient(#e9f7fb, #8fd0e0)"
      : "linear-gradient(#bab5b1, #928d89)"};
  color: #111;
  font-size: 11px;
`;

const StatusSpacer = styled.span`
  flex: 1;
`;

const StatusGap = styled.span`
  width: 9px;
`;

const StatusTray = styled.div`
  display: flex;
  align-items: center;
  justify-content: space-around;
  width: 48px;
  margin: 1px 3px 1px 0;
  border: 1px solid #55524f;
  background: #aaa5a1;
`;

const Taskbar = styled.div`
  display: flex;
  height: 39px;
  border-top: 1px solid #d18a9c;
  background: linear-gradient(
    60deg,
    #b4052c 0%,
    #c00a34 10%,
    #9c0a2a 16%,
    #b01238 28%,
    #8d2c48 36%,
    #b03a78 41%,
    #962a48 45%,
    #8a2440 47%,
    #2d0b14 50%,
    #43101c 53%,
    #c2359a 55%,
    #b02a7c 57%,
    #8a1240 59%,
    #4a0e22 62%,
    #2a0a12 68%,
    #581034 76%,
    #a03a86 83%,
    #b252a0 91%,
    #7a1840 94%,
    #4a0c1e 100%
  );
  color: #fff;
`;

const StartButton = styled.button`
  width: 54px;
`;

const TaskbarApps = styled.div`
  display: flex;
  flex: 1;
  gap: 4px;
  padding-left: 6px;
`;

const TaskButton = styled.button`
  width: 58px;
  height: 38px;
  border-radius: 3px;
  font-family: "Liberation Sans", sans-serif;

  ${({ $open }) =>
    $open &&
    css`
      border: 1px solid #e0a9b5;
      background: linear-gradient(150deg, #ffffff77, #ffffff22 55%, #ffffff33);
    `}

  ${({ $active }) =>
    $active &&
    css`
      background: linear-gradient(150deg, #ffffffbb, #ffffff66 55%, #ffffff99);
    `}
`;

const LanguageButton = styled.button`
  width: 28px;
  height: 34px;
  font-size: 11px;
`;

const TrayHelp = styled.button`
  width: 38px;
`;

const Tray = styled.div`
  display: flex;
  align-items: center;
  gap: 8px;
  padding-left: 13px;
  font-family: "Liberation Sans", sans-serif;
`;

const Clock = styled.div`
  display: flex;
  flex-direction: column;
  align-items: center;
  justify-content: center;
  width: 88px;
  font-size: 11px;
  line-height: 17px;
`;

const ShowDesktop = styled.button`
  width: 13px;
  border: 1px solid #8d5363;
  background: linear-gradient(#ffffff44, #ffffff11);
`;
